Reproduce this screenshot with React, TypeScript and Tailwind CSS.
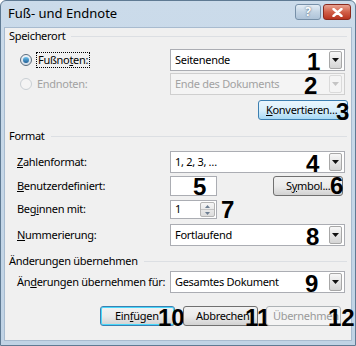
import type { ReactNode } from 'react'

const ui = "font-['Noto_Sans','Open_Sans',sans-serif]"
const big = "font-['Liberation_Sans',Arial,sans-serif] font-bold text-black leading-none tracking-normal text-[24px]"

function Num({ n, className }: { n: string; className: string }) {
  return <span className={`absolute ${big} ${className}`}>{n}</span>
}

function Arrow({ disabled }: { disabled?: boolean }) {
  return (
    <div
      className={`flex items-center justify-center w-[13px] h-[18px] rounded-[2px] border ${
        disabled
          ? 'border-[#dadada] bg-[#f4f4f4]'
          : 'border-[#a7a7a7] bg-gradient-to-b from-[#f7f7f7] to-[#d5d5d5]'
      }`}
    >
      <svg width="7" height="4" viewBox="0 0 7 4">
        <path d="M0 0h7L3.5 4z" fill={disabled ? '#c4c4c4' : '#111'} />
      </svg>
    </div>
  )
}

function Combo({ text, disabled, children }: { text: string; disabled?: boolean; children?: ReactNode }) {
  return (
    <div
      className={`relative flex items-center h-[22px] w-[175px] border pl-[4px] pr-[2px] ${
        disabled ? 'border-[#cfcfcf] bg-[#f4f4f4] text-[#a2a2a2]' : 'border-[#abadb3] bg-white text-black'
      }`}
    >
      <span className="flex-1 truncate">{text}</span>
      <Arrow disabled={disabled} />
      {children}
    </div>
  )
}

function Btn({
  children,
  kind = 'normal',
  className = '',
}: {
  children: ReactNode
  kind?: 'normal' | 'hot' | 'default' | 'disabled'
  className?: string
}) {
  const styles = {
    normal: 'border-[#707070] bg-gradient-to-b from-[#f2f2f2] via-[#ebebeb] to-[#d2d2d2] text-black',
    hot: 'border-[#3c7fb1] bg-gradient-to-b from-[#eaf6fd] via-[#d9f0fc] to-[#a7d9f5] text-black',
    default: 'border-[#3c7fb1] bg-gradient-to-b from-[#f2f2f2] via-[#ebebeb] to-[#d2d2d2] text-black shadow-[inset_0_0_0_1px_#48d8fb]',
    disabled: 'border-[#adb2b5] bg-[#f4f4f4] text-[#9a9a9a]',
  }[kind]
  return (
    <div className={`relative flex items-center h-[20px] rounded-[3px] border whitespace-nowrap ${styles} ${className}`}>
      {children}
    </div>
  )
}

function Group({ title }: { title: string }) {
  return (
    <div className="flex items-center h-[16px] pl-[4px] pr-[4px] gap-[6px]">
      <span>{title}</span>
      <div className="flex-1 h-px bg-[#dcdfe3]" />
    </div>
  )
}

function Row({ label, children, className = '' }: { label: ReactNode; children: ReactNode; className?: string }) {
  return (
    <div className={`flex items-center ${className}`}>
      <div className="w-[165px] pl-[12px] whitespace-nowrap">{label}</div>
      {children}
    </div>
  )
}

export default function App() {
  return (
    <div className={`${ui} text-[11px] tracking-[-0.3px] w-[356px] h-[346px] overflow-hidden flex flex-col bg-gradient-to-b from-[#cbdbea] to-[#c0d3e5] border border-[#5f7a93] rounded-t-[6px]`}>
      <header className="h-[26px] flex items-center pl-[7px] pr-[4px] shrink-0">
        <span className="flex-1 text-[13px] tracking-normal text-black">Fuß- und Endnote</span>
        <div className="flex items-center gap-[2px] self-start mt-[3px]">
          <div className="w-[26px] h-[16px] rounded-[3px] border border-[#7790a8] bg-gradient-to-b from-[#e4edf5] via-[#c3d4e4] to-[#aec3d8] flex items-center justify-center text-[12px] font-bold text-white [text-shadow:0_0_2px_#34495e]">
            ?
          </div>
          <div className="w-[28px] h-[16px] rounded-[3px] border border-[#8a2a1e] bg-gradient-to-b from-[#e8a493] via-[#d15f48] to-[#b8331e] flex items-center justify-center">
            <svg width="11" height="9" viewBox="0 0 11 9">
              <path d="M1.5 1l8 7M9.5 1l-8 7" stroke="#fff" strokeWidth="2.4" strokeLinecap="round" />
            </svg>
          </div>
        </div>
      </header>

      <div className="flex-1 mx-[3px] mb-[4px] bg-[#f0f0f0] border border-[#a8bbcf] flex flex-col">
        <Group title="Speicherort" />

        <Row
          className="mt-[5px]"
          label={
            <div className="flex items-center gap-[4px] pl-[3px]">
              <span className="w-[12px] h-[12px] rounded-full border border-[#5b6c7c] bg-gradient-to-b from-[#f0f4f8] to-[#d4dee8] flex items-center justify-center">
                <span className="w-[6px] h-[6px] rounded-full bg-gradient-to-b from-[#6dc4f0] to-[#1f5e95]" />
              </span>
              <span className="border border-dotted border-black px-[1px] leading-[14px]">
                Fußno<u>t</u>en:
              </span>
            </div>
          }
        >
          <Combo text="Seitenende">
            <Num n="1" className="left-[136px] top-[0px]" />
          </Combo>
        </Row>

        <Row
          className="mt-[2px]"
          label={
            <div className="flex items-center gap-[5px] pl-[3px] text-[#a2a2a2]">
              <span className="w-[12px] h-[12px] rounded-full border border-[#c9cfd4] bg-[#f4f4f4]" />
              <span>Endnoten:</span>
            </div>
          }
        >
          <Combo text="Ende des Dokuments" disabled>
            <Num n="2" className="left-[133px] top-[0px]" />
          </Combo>
        </Row>

        <div className="flex justify-end pr-[3px] mt-[5px]">
          <Btn kind="hot" className="w-[90px] pl-[7px]">
            <span>
              <u>K</u>onvertieren...
            </span>
            <Num n="3" className="left-[77px] top-[-1px]" />
          </Btn>
        </div>

        <div className="mt-[8px]">
          <Group title="Format" />
        </div>

        <Row className="mt-[7px]" label={<span><u>Z</u>ahlenformat:</span>}>
          <Combo text="1, 2, 3, …">
            <Num n="4" className="left-[135px] top-[0px]" />
          </Combo>
        </Row>

        <Row className="mt-[3px]" label={<span><u>B</u>enutzerdefiniert:</span>}>
          <div className="relative w-[47px] h-[20px] border border-[#abadb3] bg-white">
            <Num n="5" className="left-[22px] top-[-2px]" />
          </div>
          <Btn className="w-[70px] ml-[56px] pl-[12px]">
            <span>
              S<u>y</u>mbol...
            </span>
            <Num n="6" className="left-[56px] top-[-3px]" />
          </Btn>
        </Row>

        <Row className="mt-[4px]" label={<span>Beg<u>i</u>nnen mit:</span>}>
          <div className="relative flex items-center w-[47px] h-[19px] border border-[#abadb3] bg-white pl-[4px] pr-[1px]">
            <span className="flex-1">1</span>
            <div className="flex flex-col w-[15px] h-[15px] border border-[#b4b4b4] rounded-[2px] bg-gradient-to-b from-[#f6f6f6] to-[#dcdcdc]">
              <div className="flex-1 flex items-center justify-center border-b border-[#c4c4c4]">
                <svg width="5" height="3" viewBox="0 0 5 3"><path d="M0 3h5L2.5 0z" fill="#6e7f92" /></svg>
              </div>
              <div className="flex-1 flex items-center justify-center">
                <svg width="5" height="3" viewBox="0 0 5 3"><path d="M0 0h5L2.5 3z" fill="#6e7f92" /></svg>
              </div>
            </div>
            <Num n="7" className="left-[50px] top-[-3px]" />
          </div>
        </Row>

        <Row className="mt-[5px]" label={<span><u>N</u>ummerierung:</span>}>
          <Combo text="Fortlaufend">
            <Num n="8" className="left-[135px] top-[0px]" />
          </Combo>
        </Row>

        <div className="mt-[7px]">
          <Group title="Änderungen übernehmen" />
        </div>

        <Row
          className="mt-[2px]"
          label={
            <span>
              Än<u>d</u>erungen übernehmen für:
            </span>
          }
        >
          <Combo text="Gesamtes Dokument">
            <Num n="9" className="left-[134px] top-[0px]" />
          </Combo>
        </Row>

        <div className="flex items-center mt-[13px] pl-[95px] gap-[8px]">
          <Btn kind="default" className="w-[75px] pl-[14px]">
            <span>
              Ein<u>f</u>ügen
            </span>
            <Num n="10" className="left-[57px] top-[-1px]" />
          </Btn>
          <Btn className="w-[75px] pl-[12px]">
            <span>Abbrechen</span>
            <Num n="11" className="left-[61px] top-[-1px]" />
          </Btn>
          <Btn kind="disabled" className="w-[75px] pl-[6px]">
            <span>Übernehmen</span>
            <Num n="12" className="left-[61px] top-[-1px]" />
          </Btn>
        </div>
      </div>
    </div>
  )
}
